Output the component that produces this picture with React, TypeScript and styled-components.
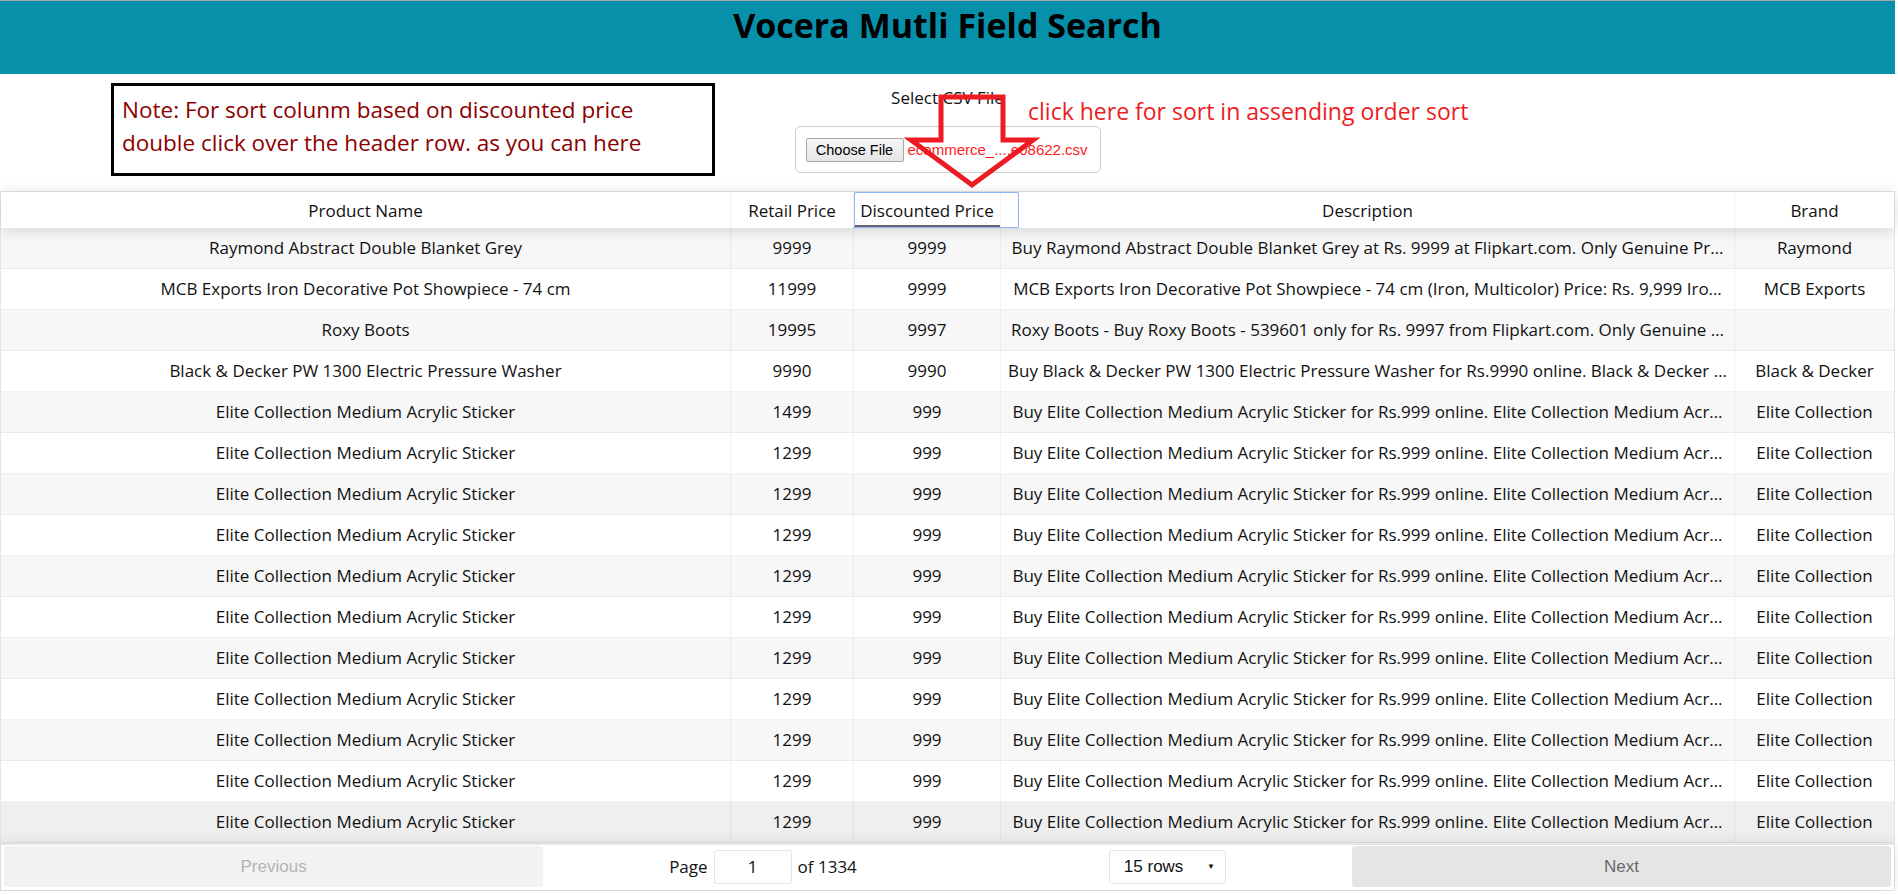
import styled, { createGlobalStyle } from "styled-components";

type Product = {
  name: string;
  retail: number;
  discounted: number;
  description: string;
  brand: string;
};

const elite = (retail: number): Product => ({
  name: "Elite Collection Medium Acrylic Sticker",
  retail,
  discounted: 999,
  description:
    "Buy Elite Collection Medium Acrylic Sticker for Rs.999 online. Elite Collection Medium Acr…",
  brand: "Elite Collection",
});

// descriptions are already cut the way the table shows them
const products: Product[] = [
  {
    name: "Raymond Abstract Double Blanket Grey",
    retail: 9999,
    discounted: 9999,
    description:
      "Buy Raymond Abstract Double Blanket Grey at Rs. 9999 at Flipkart.com. Only Genuine Pr…",
    brand: "Raymond",
  },
  {
    name: "MCB Exports Iron Decorative Pot Showpiece - 74 cm",
    retail: 11999,
    discounted: 9999,
    description:
      "MCB Exports Iron Decorative Pot Showpiece - 74 cm (Iron, Multicolor) Price: Rs. 9,999 Iro…",
    brand: "MCB Exports",
  },
  {
    name: "Roxy Boots",
    retail: 19995,
    discounted: 9997,
    description:
      "Roxy Boots - Buy Roxy Boots - 539601 only for Rs. 9997 from Flipkart.com. Only Genuine …",
    brand: "",
  },
  {
    name: "Black & Decker PW 1300 Electric Pressure Washer",
    retail: 9990,
    discounted: 9990,
    description:
      "Buy Black & Decker PW 1300 Electric Pressure Washer for Rs.9990 online. Black & Decker …",
    brand: "Black & Decker",
  },
  elite(1499),
  ...Array.from({ length: 10 }, () => elite(1299)),
];

const GRID = "730px 123px 147px 734px 1fr";

export default function App() {
  return (
    <Page>
      <GlobalStyle />
      <TitleBar>
        <Title>Vocera Mutli Field Search</Title>
      </TitleBar>

      <Toolbar>
        <NoteBox>
          Note: For sort colunm based on discounted price double click over the
          header row. as you can here
        </NoteBox>
        <Upload>
          <UploadLabel>Select CSV File</UploadLabel>
          <FileBox>
            <ChooseButton>Choose File</ChooseButton>
            <FileName>ecommerce_....e08622.csv</FileName>
          </FileBox>
        </Upload>
        <HintArrow viewBox="0 0 135 95" width="135" height="95">
          <polygon
            points="36,3 98,3 98,46 128,46 67,91 6,46 36,46"
            fill="none"
            stroke="#ed1c24"
            strokeWidth="5"
          />
        </HintArrow>
        <HintText>click here for sort in assending order sort</HintText>
      </Toolbar>

      <Table>
        <HeadRow>
          <HeadCell>Product Name</HeadCell>
          <HeadCell>Retail Price</HeadCell>
          <HeadCell $sorted $focused>
            Discounted Price
          </HeadCell>
          <HeadCell>Description</HeadCell>
          <HeadCell $last>Brand</HeadCell>
        </HeadRow>

        <Body>
          {products.map((p, i) => (
            <Row key={i} $odd={i % 2 === 0} $highlight={i === products.length - 1}>
              <Cell>{p.name}</Cell>
              <Cell>{p.retail}</Cell>
              <Cell>{p.discounted}</Cell>
              <Cell>{p.description}</Cell>
              <Cell $last>{p.brand}</Cell>
            </Row>
          ))}
        </Body>

        <Pagination>
          <PageButton $disabled>Previous</PageButton>
          <PageCenter>
            <PageInfo>
              Page <PageInput>1</PageInput> of 1334
            </PageInfo>
            <SizeSelect>
              15 rows <Caret>▼</Caret>
            </SizeSelect>
          </PageCenter>
          <PageButton>Next</PageButton>
        </Pagination>
      </Table>
    </Page>
  );
}

const GlobalStyle = createGlobalStyle`
  html, body {
    margin: 0;
    padding: 0;
    background: #fff;
  }
  body {
    font-family: "Open Sans", "Noto Sans", sans-serif;
    color: #111;
  }
`;

const Page = styled.div`
  width: 1895px;
  border-top: 1px solid #a8a8a8;
`;

const TitleBar = styled.header`
  height: 73px;
  background: #0690a9;
  display: flex;
  justify-content: center;
`;

const Title = styled.h1`
  margin: 0;
  padding-top: 1px;
  font-size: 34px;
  line-height: 46px;
  font-weight: 700;
  color: #000;
`;

const Toolbar = styled.section`
  position: relative;
  height: 117px;
  display: grid;
  grid-template-columns: 1fr 306px 1fr;
`;

const NoteBox = styled.div`
  box-sizing: border-box;
  width: 604px;
  height: 93px;
  margin: 9px 0 0 111px;
  padding: 7px 8px 0;
  border: 3px solid #000;
  color: #8b0000;
  font-size: 22.5px;
  line-height: 33px;
`;

const Upload = styled.div`
  display: flex;
  flex-direction: column;
  align-items: center;
`;

const UploadLabel = styled.div`
  margin-top: 12px;
  font-size: 17px;
  line-height: 24px;
`;

const FileBox = styled.div`
  box-sizing: border-box;
  width: 306px;
  height: 47px;
  margin-top: 16px;
  padding: 0 10px;
  display: flex;
  align-items: center;
  gap: 4px;
  border: 1px solid #ccc;
  border-radius: 6px;
`;

const ChooseButton = styled.button`
  height: 24px;
  width: 98px;
  padding: 0;
  border: 1px solid #a9a9a9;
  border-radius: 2px;
  background: linear-gradient(#f6f6f6, #e6e6e6);
  font-family: "Liberation Sans", Arial, sans-serif;
  font-size: 14.5px;
  color: #000;
`;

const FileName = styled.span`
  font-family: "Liberation Sans", Arial, sans-serif;
  font-size: 15px;
  color: #ff1a1a;
  white-space: nowrap;
`;

const HintArrow = styled.svg`
  position: absolute;
  left: 905px;
  top: 20px;
  overflow: visible;
`;

const HintText = styled.div`
  position: absolute;
  left: 1028px;
  top: 21px;
  font-size: 23px;
  line-height: 32px;
  color: #ed1c24;
  white-space: nowrap;
`;

const Table = styled.div`
  border: 1px solid rgba(0, 0, 0, 0.1);
  display: flex;
  flex-direction: column;
  font-size: 17px;
`;

const HeadRow = styled.div`
  position: relative;
  z-index: 1;
  display: grid;
  grid-template-columns: ${GRID};
  height: 36px;
  background: #fff;
  box-shadow: 0 2px 15px 0 rgba(0, 0, 0, 0.15);
`;

const HeadCell = styled.div<{ $sorted?: boolean; $focused?: boolean; $last?: boolean }>`
  position: relative;
  display: flex;
  align-items: center;
  justify-content: center;
  padding: 0 5px;
  white-space: nowrap;
  border-right: ${(p) => (p.$last ? "none" : "1px solid rgba(0, 0, 0, 0.05)")};
  box-shadow: ${(p) => (p.$sorted ? "inset 0 -3px 0 0 rgba(0, 0, 0, 0.6)" : "none")};

  &::after {
    content: "";
    display: ${(p) => (p.$focused ? "block" : "none")};
    position: absolute;
    left: 0;
    top: 0;
    bottom: 0;
    right: -19px;
    border: 1px solid #8fb4f6;
    border-radius: 1px;
  }
`;

const Body = styled.div`
  display: flex;
  flex-direction: column;
`;

const Row = styled.div<{ $odd: boolean; $highlight: boolean }>`
  display: grid;
  grid-template-columns: ${GRID};
  height: 40px;
  border-bottom: 1px solid rgba(0, 0, 0, 0.05);
  background: ${(p) => (p.$highlight ? "#efefef" : p.$odd ? "#f7f7f7" : "#fff")};
`;

const Cell = styled.div<{ $last?: boolean }>`
  padding: 0 5px;
  line-height: 40px;
  text-align: center;
  white-space: nowrap;
  overflow: hidden;
  text-overflow: ellipsis;
  border-right: ${(p) => (p.$last ? "none" : "1px solid rgba(0, 0, 0, 0.05)")};
`;

const Pagination = styled.div`
  position: relative;
  z-index: 1;
  display: flex;
  height: 41px;
  padding: 1px 3px 3px;
  border-top: 2px solid rgba(0, 0, 0, 0.1);
  box-shadow: 0 0 15px 0 rgba(0, 0, 0, 0.1);
  background: #fff;
`;

const PageButton = styled.div<{ $disabled?: boolean }>`
  flex: 1;
  display: flex;
  align-items: center;
  justify-content: center;
  border-radius: 3px;
  background: ${(p) => (p.$disabled ? "#f2f2f2" : "#e5e5e5")};
  color: ${(p) => (p.$disabled ? "#b4b4b4" : "#6a6a6a")};
  font-family: "Liberation Sans", Arial, sans-serif;
  font-size: 17px;
`;

const PageCenter = styled.div`
  flex: 1.5;
  display: flex;
  align-items: center;
  justify-content: space-around;
`;

const PageInfo = styled.div`
  display: flex;
  align-items: center;
  gap: 6px;
`;

const PageInput = styled.div`
  box-sizing: border-box;
  width: 78px;
  height: 34px;
  display: flex;
  align-items: center;
  justify-content: center;
  border: 1px solid rgba(0, 0, 0, 0.1);
  border-radius: 3px;
  background: #fff;
`;

const SizeSelect = styled.div`
  box-sizing: border-box;
  width: 117px;
  height: 34px;
  display: flex;
  align-items: center;
  justify-content: space-between;
  padding: 0 10px 0 14px;
  border: 1px solid rgba(0, 0, 0, 0.1);
  border-radius: 3px;
  font-family: "Liberation Sans", Arial, sans-serif;
  font-size: 17px;
`;

const Caret = styled.span`
  font-size: 8px;
`;
